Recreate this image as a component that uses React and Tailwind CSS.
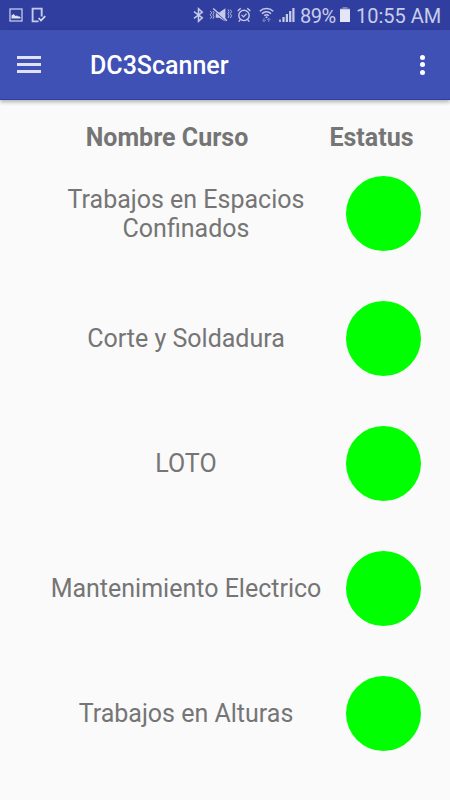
// src/App.jsx
import React from 'react';

function ImageIcon() {
  return (
    <svg width="14" height="14" viewBox="0 0 14 14" className="block">
      <rect x="1" y="1" width="12" height="12" fill="none" stroke="#c5cae9" strokeWidth="1.3" />
      <path d="M2.5 10.5V7.5L4.5 6l2 2L8 7.5l1.2 1 1-.3 1.3 1v1.3z" fill="#dfe2f3" />
    </svg>
  );
}

function PhoneCheckIcon() {
  return (
    <svg width="15" height="16" viewBox="0 0 15 16" className="block">
      <path d="M10.7 9.5V1.6H1.6v12.8h6" fill="none" stroke="#c5cae9" strokeWidth="1.9" />
      <path d="M7.6 11l2.4 2.6 4.2-4.4" fill="none" stroke="#d8dbf0" strokeWidth="1.7" />
    </svg>
  );
}

function BluetoothIcon() {
  return (
    <svg width="11" height="16" viewBox="0 0 11 16" className="block">
      <path d="M1 4.7l8.3 6.1-3.8 3.5V1.7l3.8 3.5L1 11.3" fill="none" stroke="#c5cae9" strokeWidth="1.5" />
    </svg>
  );
}

function MuteVibrateIcon() {
  return (
    <svg width="24" height="16" viewBox="0 0 24 16" className="block">
      <path d="M1.2 4l1.6 1.8-1.6 2 1.6 2-1.6 2M4 4l1 1.8-1 2 1 2-1 2" fill="none" stroke="#b0b6de" strokeWidth="1" />
      <path d="M6.8 5.5h3.4L16.4 1.3v13.2L10.2 10.7H6.8z" fill="#c5cae9" />
      <path d="M4.6 2.7L17.4 14.2" stroke="#303f9f" strokeWidth="1.4" />
      <path d="M4.2 1.5L17.8 13.6" stroke="#c5cae9" strokeWidth="1.5" />
      <path d="M19 2.5l1 2-1 2.2 1 2.1-1 2.2M21.3 2.5l1.3 2-1.3 2.2 1.3 2.1-1.3 2.2" fill="none" stroke="#b0b6de" strokeWidth="1" />
    </svg>
  );
}

function AlarmIcon() {
  return (
    <svg width="14" height="16" viewBox="0 0 14 16" className="block" fill="none" stroke="#c5cae9">
      <circle cx="7" cy="8.4" r="5.2" strokeWidth="1.4" />
      <path d="M.7 4L3.7 1.3M13.3 4L10.3 1.3M3.3 12.7L1.8 14.7M10.7 12.7l1.5 2" strokeWidth="1.4" />
      <path d="M4.5 7.9l2 2L9.6 6.6" strokeWidth="1.3" />
    </svg>
  );
}

function WifiIcon() {
  return (
    <svg width="15" height="16" viewBox="0 0 15 16" className="block">
      <g fill="none" stroke="#c5cae9" strokeWidth="1.5">
        <path d="M.8 4.2c3.7-3.6 9.7-3.6 13.4 0" />
        <path d="M3 6.6c2.5-2.4 6.5-2.4 9 0" />
        <path d="M5.2 8.8c1.4-1.3 3.2-1.3 4.6 0" />
      </g>
      <circle cx="7.5" cy="10.2" r="1" fill="#c5cae9" />
      <path d="M5 11v3.6M3.3 13l1.7 1.7L6.7 13M9.8 15v-3.6M8.1 13l1.7-1.7 1.7 1.7" fill="none" stroke="#8790ca" strokeWidth="1" />
    </svg>
  );
}

function SignalIcon() {
  return (
    <svg width="16" height="16" viewBox="0 0 16 16" className="block" fill="#c5cae9">
      <rect x="0" y="12.5" width="2" height="2.5" fill="#a4abd9" />
      <rect x="3.4" y="10" width="2.2" height="5" />
      <rect x="6.8" y="7" width="2.2" height="8" />
      <rect x="10.1" y="4" width="2.2" height="11" />
      <rect x="13.3" y="1" width="2.2" height="14" />
    </svg>
  );
}

function BatteryIcon() {
  return (
    <svg width="10" height="16" viewBox="0 0 10 16" className="block">
      <path d="M2.5 0h5v1.5H10V3H0V1.5h2.5z" fill="#7b85c4" />
      <path d="M0 2.3h10V15H0z" fill="#e4e6f5" />
    </svg>
  );
}

export default function App() {
  const cursos = [
    { id: 1, nombre: 'Trabajos en Espacios Confinados' },
    { id: 2, nombre: 'Corte y Soldadura' },
    { id: 3, nombre: 'LOTO' },
    { id: 4, nombre: 'Mantenimiento Electrico' },
    { id: 5, nombre: 'Trabajos en Alturas' },
  ];

  return (
    <div className="w-[450px] h-[800px] overflow-hidden bg-[#fafafa] font-[Roboto,sans-serif] text-[#757575]">
      {/* Status bar */}
      <div className="flex h-[30px] items-center bg-[#303f9f] pl-[9px] text-[20px] leading-[30px] text-[#c9cde9]">
        <ImageIcon />
        <div className="ml-2"><PhoneCheckIcon /></div>
        <div className="ml-[147px]"><BluetoothIcon /></div>
        <div className="ml-[5px]"><MuteVibrateIcon /></div>
        <div className="ml-1"><AlarmIcon /></div>
        <div className="ml-2"><WifiIcon /></div>
        <div className="ml-[5px]"><SignalIcon /></div>
        <span className="ml-[5px] w-[36px] whitespace-nowrap pt-[2px] tracking-[-0.5px]">89%</span>
        <div className="ml-1"><BatteryIcon /></div>
        <span className="ml-1.5 whitespace-nowrap pt-[2px]">10:55 AM</span>
      </div>

      {/* Toolbar */}
      <div className="flex h-[70px] items-center border-b border-[#303f9f] bg-[#3f51b5] pl-[17px] pr-[25px] text-white shadow-[0_2px_4px_rgba(0,0,0,0.3)]">
        <button className="flex w-6 flex-col gap-[4px]">
          <span className="h-[3px] w-6 bg-[#dfe2f3]" />
          <span className="h-[3px] w-6 bg-[#dfe2f3]" />
          <span className="h-[3px] w-6 bg-[#dfe2f3]" />
        </button>
        <h1 className="ml-[49px] flex-1 pt-[2px] text-[25px] font-medium">DC3Scanner</h1>
        <button className="flex flex-col gap-[2.5px]">
          <span className="size-[5px] rounded-full bg-white" />
          <span className="size-[5px] rounded-full bg-white" />
          <span className="size-[5px] rounded-full bg-white" />
        </button>
      </div>

      {/* Table header */}
      <div className="flex h-[51px] items-center pt-[25px] pb-[1px] text-[25px] font-bold">
        <span className="ml-[67px] w-[200px] text-center">Nombre Curso</span>
        <span className="ml-[44px] w-[121px] text-center">Estatus</span>
      </div>

      {/* Rows */}
      {cursos.map((curso) => (
        <div key={curso.id} className="flex h-[125px] items-center pl-[46px]">
          <span className="w-[280px] text-center text-[25px] leading-[29px]">{curso.nombre}</span>
          <span className="ml-5 size-[75px] rounded-full bg-[#00ff00]" />
        </div>
      ))}
    </div>
  );
}
